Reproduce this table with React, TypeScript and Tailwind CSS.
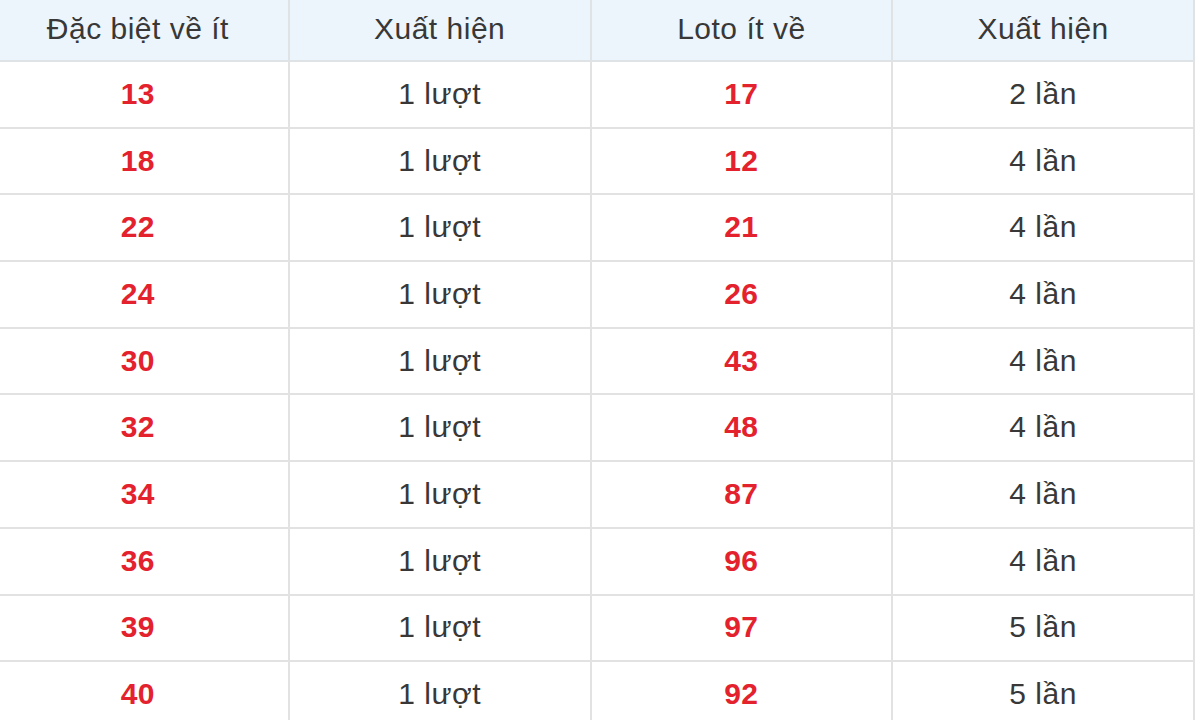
const rows: [string, string, string, string][] = [
  ["13", "1 lượt", "17", "2 lần"],
  ["18", "1 lượt", "12", "4 lần"],
  ["22", "1 lượt", "21", "4 lần"],
  ["24", "1 lượt", "26", "4 lần"],
  ["30", "1 lượt", "43", "4 lần"],
  ["32", "1 lượt", "48", "4 lần"],
  ["34", "1 lượt", "87", "4 lần"],
  ["36", "1 lượt", "96", "4 lần"],
  ["39", "1 lượt", "97", "5 lần"],
  ["40", "1 lượt", "92", "5 lần"],
];

const headers = ["Đặc biệt về ít", "Xuất hiện", "Loto ít về", "Xuất hiện"];

export default function App() {
  return (
    <main className="h-[720px] w-[1200px] overflow-hidden bg-white font-['Liberation_Sans',Arial,sans-serif] text-[30px] tracking-[0.5px] text-[#383838]">
      <div className="-ml-3 w-[1207px]">
        <div className="grid h-[62px] grid-cols-4 bg-[#edf5fc]">
          {headers.map((h, i) => (
            <div
              key={i}
              className="flex items-center justify-center border-r-2 border-b-2 border-[#dfe3e6] pb-1"
            >
              {h}
            </div>
          ))}
        </div>
        {rows.map((r, i) => (
          <div key={i} className="grid h-[66.7px] grid-cols-4">
            {r.map((c, j) => (
              <div
                key={j}
                className={
                  "flex items-center justify-center border-r-2 border-b-2 border-[#e2e2e2] pb-0.5" +
                  (j % 2 === 0 ? " font-bold text-[#e3222d]" : "")
                }
              >
                {c}
              </div>
            ))}
          </div>
        ))}
      </div>
    </main>
  );
}
